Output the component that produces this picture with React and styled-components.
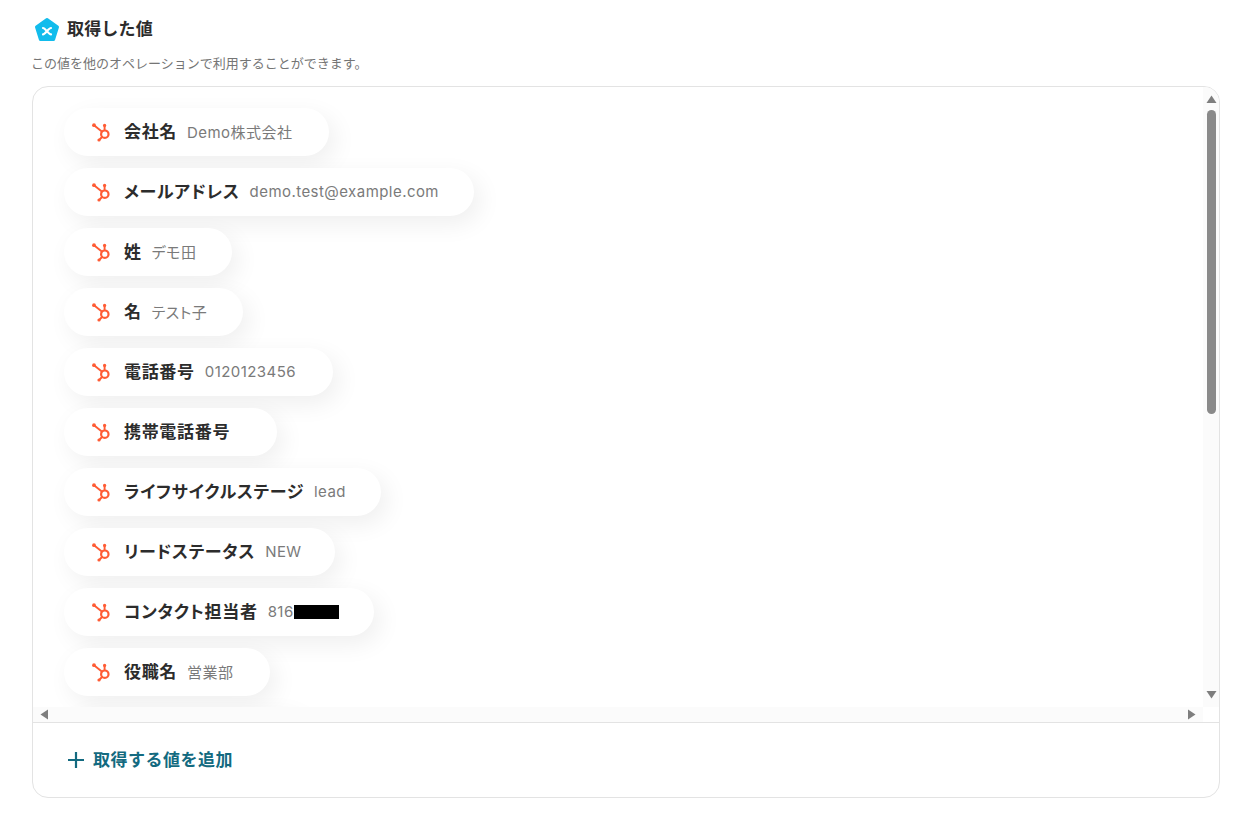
import React from 'react';
import styled, { createGlobalStyle } from 'styled-components';

const GlobalStyle = createGlobalStyle`
  html, body {
    margin: 0;
    padding: 0;
    background: #fff;
  }
  body {
    font-family: Inter, "Noto Sans CJK JP", sans-serif;
    color: #2c2c2c;
  }
`;

const Page = styled.div`
  width: 1248px;
  height: 813px;
  box-sizing: border-box;
  padding: 16px 28px 15px 32px;
  display: flex;
  flex-direction: column;
  overflow: hidden;
`;

const TitleRow = styled.div`
  display: flex;
  align-items: center;
  gap: 7px;
  height: 27px;
  padding-left: 2px;
`;

const Title = styled.h2`
  margin: 0 0 4px;
  font-size: 17px;
  font-weight: 700;
  letter-spacing: 0.01em;
  color: #2c2c2c;
`;

const Caption = styled.p`
  margin: 11px 0 14px -1px;
  font-size: 13px;
  line-height: 18px;
  color: #757575;
`;

const Card = styled.section`
  flex: 1;
  min-height: 0;
  border: 1px solid #e3e3e3;
  border-radius: 16px;
  display: flex;
  flex-direction: column;
  overflow: hidden;
`;

const ScrollArea = styled.div`
  height: 635px;
  display: grid;
  grid-template-columns: 1fr 16px;
  grid-template-rows: 1fr 15px;
`;

const Viewport = styled.div`
  overflow: hidden;
  padding: 21px 31px;
  display: flex;
  flex-direction: column;
  align-items: flex-start;
  gap: 12px;
`;

const Pill = styled.div`
  flex: none;
  height: 48px;
  box-sizing: border-box;
  min-width: ${(props) => props.$width}px;
  padding: 0 24px 0 27px;
  display: flex;
  align-items: center;
  border-radius: 24px;
  background: #fff;
  box-shadow: 6px 8px 24px rgba(0, 0, 0, 0.065);
`;

const PillIcon = styled.svg`
  flex: none;
  width: 20px;
  height: 20px;
  margin-right: 13px;
`;

const Label = styled.span`
  margin-bottom: 3px;
  font-size: 17px;
  font-weight: 700;
  letter-spacing: 0.04em;
  font-feature-settings: "palt";
  color: #2c2c2c;
  white-space: nowrap;
`;

const Value = styled.span`
  margin: 0 0 2px 10px;
  font-size: 15px;
  letter-spacing: 0.03em;
  font-feature-settings: "palt";
  color: #7a7a7a;
  white-space: nowrap;
  display: inline-flex;
  align-items: center;
`;

const Redacted = styled.span`
  display: inline-block;
  width: 45px;
  height: 14px;
  margin-bottom: -2px;
  background: #000;
`;

const VerticalBar = styled.div`
  grid-row: 1 / 2;
  grid-column: 2;
  background: #fbfbfb;
  display: flex;
  flex-direction: column;
  align-items: center;
  justify-content: space-between;
  padding: 7px 0;
  box-sizing: border-box;
  position: relative;
`;

const VerticalThumb = styled.div`
  position: absolute;
  top: 23px;
  left: 4px;
  width: 9px;
  height: 304px;
  border-radius: 5px;
  background: #8a8a8a;
`;

const HorizontalBar = styled.div`
  grid-row: 2;
  grid-column: 1;
  background: #fbfbfb;
  display: flex;
  align-items: center;
  justify-content: space-between;
  padding: 0 6px;
`;

const Corner = styled.div`
  grid-row: 2;
  grid-column: 2;
  background: #fff;
`;

const Arrow = styled.svg`
  display: block;
  width: 11px;
  height: 11px;
  fill: #7e7e7e;
`;

const Footer = styled.div`
  flex: 1;
  border-top: 1px solid #e3e3e3;
  display: flex;
  align-items: center;
  padding: 0 34px 1px;
`;

const AddButton = styled.button`
  border: 0;
  background: none;
  padding: 0;
  display: flex;
  align-items: center;
  gap: 8px;
  font-family: inherit;
  font-size: 17px;
  font-weight: 700;
  letter-spacing: 0.03em;
  color: #136a80;
`;

const AddText = styled.span`
  margin-bottom: 3px;
`;

const HubspotIcon = () => (
  <PillIcon viewBox="0 0 20 20" fill="none">
    <g stroke="#ff5c35" strokeWidth="1.9" strokeLinecap="round">
      <path d="M3 3.2 L10.8 9.6" />
      <path d="M13.6 3.5 V8" />
      <path d="M8.2 18 L11 15" />
      <circle cx="13.8" cy="12.2" r="3.7" strokeWidth="2.2" />
    </g>
    <circle cx="3" cy="3.2" r="1.9" fill="#ff5c35" />
    <circle cx="13.6" cy="3.4" r="1.6" fill="#ff5c35" />
    <circle cx="8" cy="18" r="1.6" fill="#ff5c35" />
  </PillIcon>
);

const Logo = () => (
  <svg width="26" height="26" viewBox="0 0 26 26">
    <path
      d="M13 2.5 L23.5 10 L19.6 22.5 L6.4 22.5 L2.5 10 Z"
      fill="#12bcec"
      stroke="#12bcec"
      strokeWidth="3"
      strokeLinejoin="round"
    />
    <path
      d="M9 11 C11.4 11 14.4 17.4 17 17.4 M17 11 C14.4 11 11.4 17.4 9 17.4"
      fill="none"
      stroke="#fff"
      strokeWidth="2.2"
      strokeLinecap="round"
    />
  </svg>
);

const rows = [
  { label: '会社名', value: 'Demo株式会社', width: 265 },
  { label: 'メールアドレス', value: 'demo.test@example.com', width: 410 },
  { label: '姓', value: 'デモ田', width: 168 },
  { label: '名', value: 'テスト子', width: 179 },
  { label: '電話番号', value: '0120123456', width: 269 },
  { label: '携帯電話番号', value: '', width: 213 },
  { label: 'ライフサイクルステージ', value: 'lead', width: 317 },
  { label: 'リードステータス', value: 'NEW', width: 271 },
  { label: 'コンタクト担当者', value: '816', redacted: true, width: 310 },
  { label: '役職名', value: '営業部', width: 206 },
];

export default function App() {
  return (
    <>
      <GlobalStyle />
      <Page>
        <TitleRow>
          <Logo />
          <Title>取得した値</Title>
        </TitleRow>
        <Caption>この値を他のオペレーションで利用することができます。</Caption>
        <Card>
          <ScrollArea>
            <Viewport>
              {rows.map((row) => (
                <Pill key={row.label} $width={row.width}>
                  <HubspotIcon />
                  <Label>{row.label}</Label>
                  {row.value && (
                    <Value>
                      {row.value}
                      {row.redacted && <Redacted />}
                    </Value>
                  )}
                </Pill>
              ))}
              <Pill $width={240} />
            </Viewport>
            <VerticalBar>
              <Arrow viewBox="0 0 11 11"><path d="M5.5 1.5 L10.5 9 H0.5 Z" /></Arrow>
              <VerticalThumb />
              <Arrow viewBox="0 0 11 11"><path d="M5.5 9.5 L10.5 2 H0.5 Z" /></Arrow>
            </VerticalBar>
            <HorizontalBar>
              <Arrow viewBox="0 0 11 11"><path d="M1.5 5.5 L9 0.5 V10.5 Z" /></Arrow>
              <Arrow viewBox="0 0 11 11"><path d="M9.5 5.5 L2 0.5 V10.5 Z" /></Arrow>
            </HorizontalBar>
            <Corner />
          </ScrollArea>
          <Footer>
            <AddButton>
              <svg width="18" height="18" viewBox="0 0 18 18" stroke="#136a80" strokeWidth="2.2">
                <path d="M9 1 V17 M1 9 H17" />
              </svg>
              <AddText>取得する値を追加</AddText>
            </AddButton>
          </Footer>
        </Card>
      </Page>
    </>
  );
}
